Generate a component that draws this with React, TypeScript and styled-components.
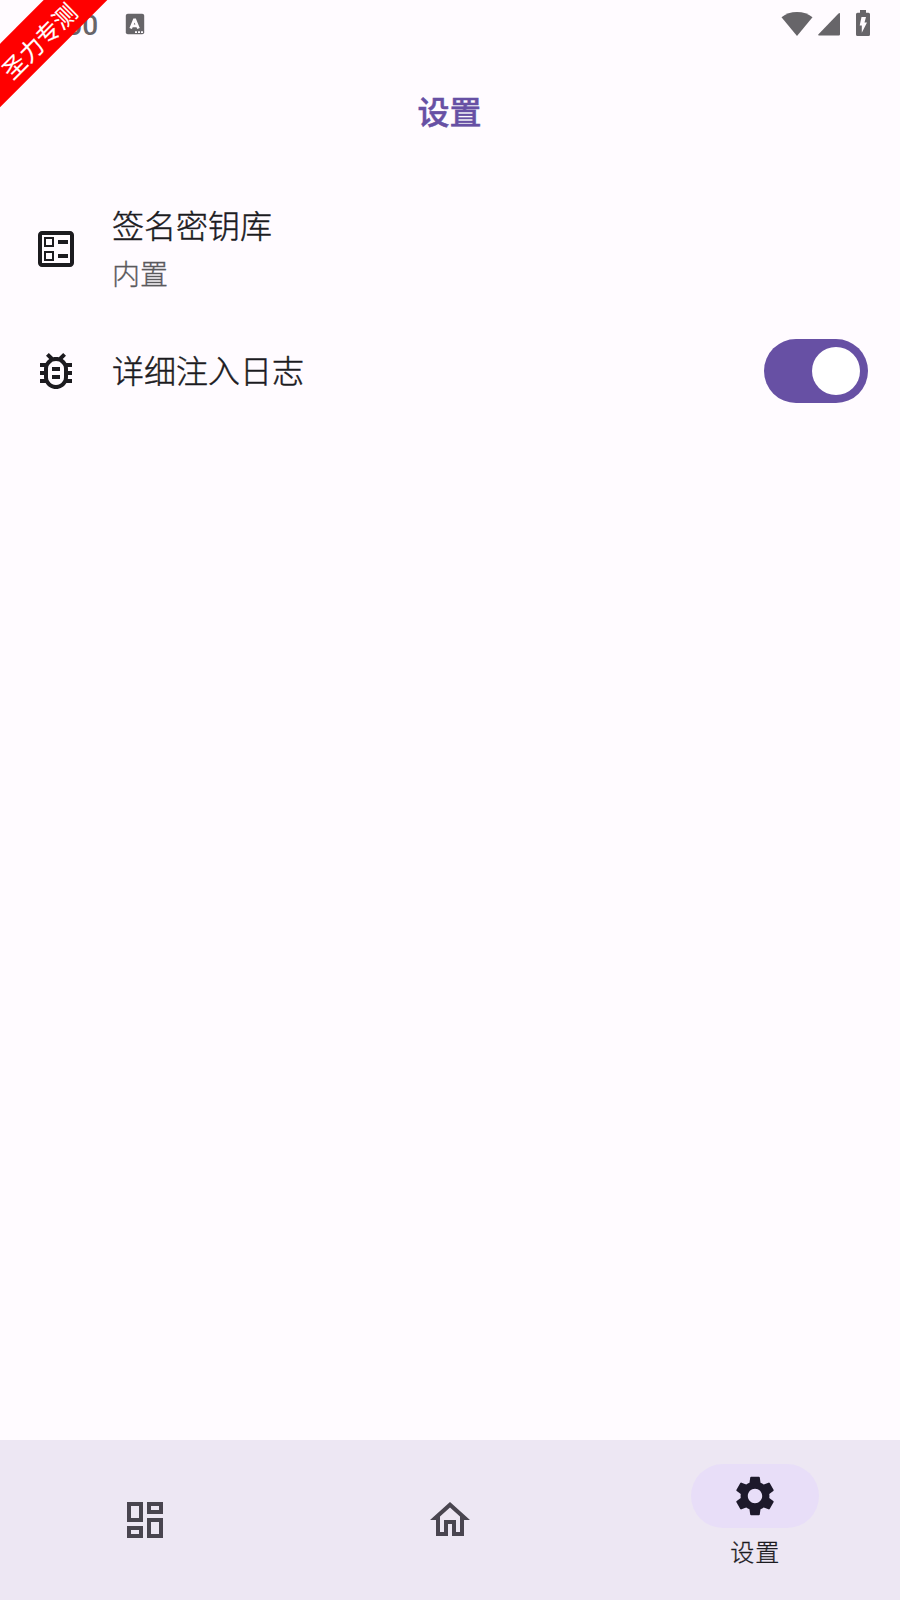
import React from "react";
import styled, { createGlobalStyle } from "styled-components";
import {
  MdOutlineBallot,
  MdOutlineBugReport,
  MdOutlineDashboard,
  MdOutlineHome,
  MdSettings,
} from "react-icons/md";

const GlobalStyle = createGlobalStyle`
  * { box-sizing: border-box; }
  body {
    margin: 0;
    background: #fffbff;
    font-family: "Noto Sans CJK SC", sans-serif;
  }
`;

const Screen = styled.div`
  position: relative;
  display: flex;
  flex-direction: column;
  width: 900px;
  height: 1600px;
  overflow: hidden;
  background: #fffbff;
  color: #1c1b1f;
`;

const StatusBar = styled.header`
  display: flex;
  align-items: center;
  justify-content: space-between;
  height: 48px;
  padding: 0 30px 0 43px;
  color: #676569;
`;

const StatusGroup = styled.div`
  display: flex;
  align-items: center;
`;

const Clock = styled.span`
  width: 82px;
  padding-top: 3px;
  font: 500 28px/32px Roboto, sans-serif;
`;

const Ribbon = styled.div`
  position: absolute;
  top: 15px;
  left: -62px;
  width: 200px;
  height: 45px;
  display: flex;
  align-items: center;
  justify-content: center;
  background: #ff0000;
  color: #fff;
  font-size: 24px;
  line-height: 45px;
  transform: rotate(-45deg);
`;

const RibbonText = styled.span`
  position: relative;
  top: 3px;
  left: -1.5px;
  font-size: 23.5px;
  -webkit-text-stroke: 0.15px #fff;
`;

const TopBar = styled.h1`
  display: flex;
  align-items: center;
  justify-content: center;
  height: 128px;
  margin: 0;
  padding: 0 1px 4px 0;
  color: #6750a4;
  font-size: 32px;
  font-weight: 500;
  line-height: 48px;
  -webkit-text-stroke: 0.45px #6750a4;
`;

const List = styled.main`
  flex: 1;
  padding-top: 16px;
`;

const ListItem = styled.div<{ $height: number }>`
  display: flex;
  align-items: center;
  gap: 32px;
  height: ${(p) => p.$height}px;
  padding: 0 32px;
  & > svg { flex: none; }
`;

const ItemText = styled.div`
  flex: 1;
  display: flex;
  flex-direction: column;
  padding-bottom: 2px;
`;

const ItemTitle = styled.span`
  padding-bottom: 3px;
  font-size: 32px;
  font-weight: 300;
  line-height: 46px;
  -webkit-text-stroke: 0.45px #1c1b1f;
`;

const ItemDetail = styled.span`
  color: #5a595c;
  font-size: 28px;
  font-weight: 300;
  line-height: 46px;
  -webkit-text-stroke: 0.3px #5a595c;
`;

const Switch = styled.button`
  display: flex;
  align-items: center;
  justify-content: flex-end;
  width: 104px;
  height: 64px;
  padding: 0 8px;
  border: 0;
  border-radius: 32px;
  background: #6750a4;
`;

const Thumb = styled.span`
  width: 48px;
  height: 48px;
  border-radius: 50%;
  background: #fff;
`;

const NavBar = styled.nav`
  display: flex;
  gap: 16px;
  height: 160px;
  background: #ede7f3;
`;

const NavItem = styled.div`
  flex: 1;
  display: flex;
  flex-direction: column;
  align-items: center;
  justify-content: center;
  color: #49454f;
`;

const NavPill = styled.div<{ $active?: boolean }>`
  display: flex;
  align-items: center;
  justify-content: center;
  width: 128px;
  height: 64px;
  border-radius: 32px;
  background: ${(p) => (p.$active ? "#e8def8" : "transparent")};
  color: ${(p) => (p.$active ? "#1d192b" : "inherit")};
`;

const NavLabel = styled.span`
  margin: 7px 0 9px;
  color: #1c1b1f;
  font-size: 24px;
  font-weight: 300;
  line-height: 32px;
  letter-spacing: 1px;
  -webkit-text-stroke: 0.3px #1c1b1f;
`;

const ImeIcon = () => (
  <svg width="20" height="22" viewBox="0 0 20 22">
    <rect x="0.8" y="0.8" width="18.4" height="20.4" rx="2" fill="currentColor" />
    <path d="M5.700 15.500 9.600 6 13.500 15.500M7 12.800H12" fill="none" stroke="#fffbff" strokeWidth="2.700" strokeLinejoin="bevel" />
    <path d="M10 18.200h2v1.800h-2zm3 0h2v1.800h-2zm3 0h2v1.800h-2z" fill="#fffbff" />
  </svg>
);

const WifiIcon = () => (
  <svg width="32" height="26" viewBox="0 0 32 26">
    <path d="M16 1C10 1 4.700 2.900 0.500 6.200L16 25 31.500 6.200C27.300 2.900 22 1 16 1Z" fill="currentColor" />
  </svg>
);

const SignalIcon = () => (
  <svg width="22" height="24" viewBox="0 0 22 24">
    <path d="M22 1.500V22.300Q22 23.500 20.800 23.500H1Q-0.500 23.500 0.500 22.300L20.500 1.500Q22 0.500 22 1.500Z" fill="currentColor" />
  </svg>
);

const BatteryIcon = () => (
  <svg width="14" height="26" viewBox="0 0 14 26">
    <path d="M4 0H10V2.700H12.500Q14 2.700 14 4.200V24.500Q14 26 12.500 26H1.500Q0 26 0 24.500V4.200Q0 2.700 1.500 2.700H4Z" fill="currentColor" />
    <path d="M5.500 7H10L8.500 12.500H11L5.800 22.700V15.500H3.700Z" fill="#fffbff" />
  </svg>
);

const StatusIcons = styled(StatusGroup)`
  & > svg:nth-child(2) { margin: 0 16px 0 5px; }
  & > svg:nth-child(3) { margin-top: -2px; }
`;

export default function App() {
  return (
    <>
      <GlobalStyle />
      <Screen>
        <StatusBar>
          <StatusGroup>
            <Clock>5:00</Clock>
            <ImeIcon />
          </StatusGroup>
          <StatusIcons>
            <WifiIcon />
            <SignalIcon />
            <BatteryIcon />
          </StatusIcons>
        </StatusBar>
        <TopBar>设置</TopBar>
        <List>
          <ListItem $height={114}>
            <MdOutlineBallot size={48} />
            <ItemText>
              <ItemTitle>签名密钥库</ItemTitle>
              <ItemDetail>内置</ItemDetail>
            </ItemText>
          </ListItem>
          <ListItem $height={130}>
            <MdOutlineBugReport size={48} />
            <ItemText>
              <ItemTitle>详细注入日志</ItemTitle>
            </ItemText>
            <Switch role="switch" aria-checked="true">
              <Thumb />
            </Switch>
          </ListItem>
        </List>
        <NavBar>
          <NavItem>
            <NavPill>
              <MdOutlineDashboard size={48} />
            </NavPill>
          </NavItem>
          <NavItem>
            <NavPill>
              <MdOutlineHome size={48} />
            </NavPill>
          </NavItem>
          <NavItem>
            <NavPill $active>
              <MdSettings size={48} />
            </NavPill>
            <NavLabel>设置</NavLabel>
          </NavItem>
        </NavBar>
        <Ribbon>
          <RibbonText>圣力专测</RibbonText>
        </Ribbon>
      </Screen>
    </>
  );
}
